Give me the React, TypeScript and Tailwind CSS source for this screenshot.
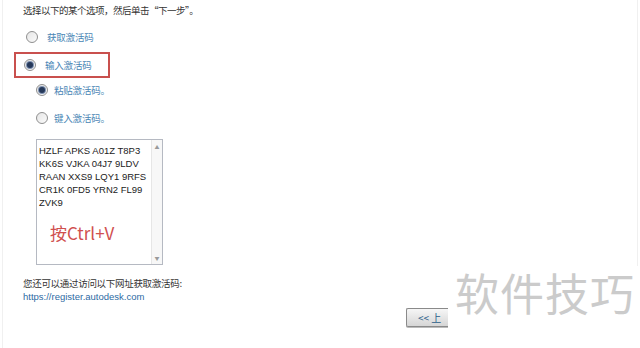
import React from 'react';

const cjk = { fontFamily: '"Noto Sans CJK SC", "Liberation Sans", sans-serif' };
const latin = { fontFamily: '"Liberation Sans", Arial, sans-serif' };

const Radio: React.FC<{ checked?: boolean }> = ({ checked }) => (
  <span className="w-[12px] h-[12px] rounded-full border border-[#8f8f8f] bg-gradient-to-br from-[#e6e6e6] to-[#fafafa] flex items-center justify-center shrink-0">
    {checked && <span className="w-[6px] h-[6px] rounded-full bg-[#26395a] ring-1 ring-[#7d90b0]"></span>}
  </span>
);

export default function App() {
  return (
    <div className="w-[640px] h-[348px] bg-white relative overflow-hidden" style={cjk}>
      <div className="mx-[2px] h-full border-x border-[#f0f0f0] pl-[11px] pt-[3px]">
        {/* heading */}
        <div className="h-[14px] leading-[14px] text-[9.5px] text-[#333] pl-[9px] tracking-[-0.5px]">
          选择以下的某个选项，然后单击“下一步”。
        </div>

        {/* option 1 */}
        <div className="mt-[12px] h-[16px] flex items-center pl-[12px] gap-[9px]">
          <Radio />
          <span className="text-[9.5px] text-[#4a86b5] tracking-[-0.2px]">获取激活码</span>
        </div>

        {/* option 2, marked */}
        <div className="mt-[7px] w-[96px] h-[26px] border-2 border-[#c9504e] flex items-center pl-[8px] gap-[9px]">
          <Radio checked />
          <span className="text-[9.5px] text-[#4a86b5] tracking-[-0.2px]">输入激活码</span>
        </div>

        {/* sub options */}
        <div className="pl-[22px]">
          <div className="mt-[4px] h-[16px] flex items-center gap-[6px]">
            <Radio checked />
            <span className="text-[9.5px] text-[#4a86b5] tracking-[-0.2px]">粘贴激活码。</span>
          </div>
          <div className="mt-[12px] h-[16px] flex items-center gap-[6px]">
            <Radio />
            <span className="text-[9.5px] text-[#4a86b5] tracking-[-0.2px]">键入激活码。</span>
          </div>

          {/* code box */}
          <div className="mt-[13px] w-[127px] h-[126px] border border-[#b5b9c2] flex">
            <div className="flex-1 pl-[2px] pt-[4px] text-[9.5px] leading-[13px] text-[#222]" style={latin}>
              <div>HZLF APKS A01Z T8P3</div>
              <div>KK6S VJKA 04J7 9LDV</div>
              <div>RAAN XXS9 LQY1 9RFS</div>
              <div>CR1K 0FD5 YRN2 FL99</div>
              <div>ZVK9</div>
              <div className="mt-[14px] pl-[11px] text-[17px] leading-[20px] text-[#d0504f]" style={cjk}>
                按Ctrl+V
              </div>
            </div>
            <div className="w-[11px] border-l border-[#e6e6e6] bg-[#f7f7f7] flex flex-col justify-between items-center py-[3px] text-[5px] text-[#9a9a9a]">
              <span>▲</span>
              <span>▼</span>
            </div>
          </div>
        </div>

        {/* footer text */}
        <div className="mt-[12px] pl-[9px]">
          <div className="h-[13px] leading-[13px] text-[9.5px] text-[#333] tracking-[-0.3px]">
            您还可以通过访问以下网址获取激活码:
          </div>
          <div className="h-[13px] leading-[13px] text-[9.5px] text-[#2d6aa3]" style={latin}>
            https://register.autodesk.com
          </div>
        </div>

        {/* back button, cut off by the watermark */}
        <div className="mt-[5px] pl-[392px] flex">
          <button className="w-[43px] h-[19px] border border-r-0 border-[#8a8a8a] rounded-l-[2px] bg-gradient-to-b from-[#f6f6f6] to-[#d6d6d6] text-[10px] leading-[17px] text-[#2a5d8a] text-left pl-[11px] whitespace-nowrap overflow-hidden shadow-[0_1px_0_#bbb]">
            &lt;&lt; 上
          </button>
        </div>
      </div>

      {/* watermark */}
      <div className="absolute left-[448px] top-[266px] w-[192px] h-[82px] bg-white">
        <div className="pl-[7px] text-[44px] leading-[52px] text-[#cbcbcb] tracking-[1px]">软件技巧</div>
      </div>
    </div>
  );
}
